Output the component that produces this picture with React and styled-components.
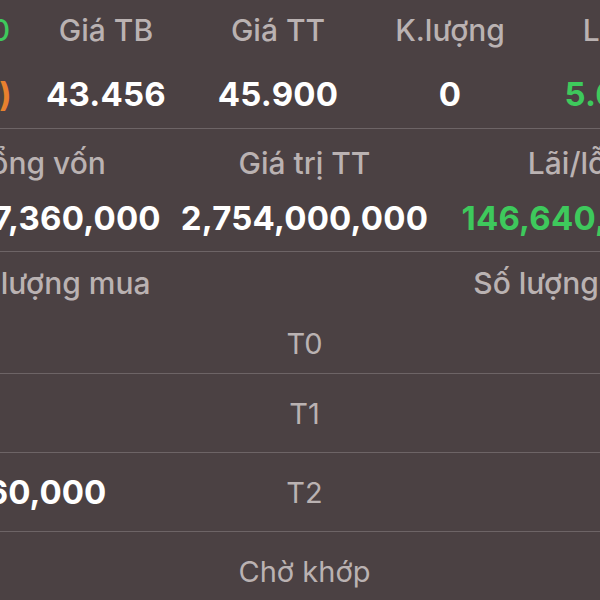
import React from "react";
import styled, { createGlobalStyle } from "styled-components";

const GlobalStyle = createGlobalStyle`
  html, body {
    margin: 0;
    padding: 0;
    background: #4b4143;
    overflow: hidden;
  }
`;

const summary = [
  { label: "HPG 1.50", value: "(+2.0%)", labelTone: "green", tone: "orange", edge: true },
  { label: "Giá TB", value: "43.456" },
  { label: "Giá TT", value: "45.900" },
  { label: "K.lượng", value: "0" },
  { label: "Lãi/lỗ", value: "5.62 %", tone: "green" },
];

const totals = [
  { label: "Tổng vốn", value: "2,607,360,000" },
  { label: "Giá trị TT", value: "2,754,000,000" },
  { label: "Lãi/lỗ", value: "146,640,000", tone: "green" },
];

const settle = [
  { buy: "", name: "T0", sell: "" },
  { buy: "", name: "T1", sell: "" },
  { buy: "160,000", name: "T2", sell: "" },
  { buy: "", name: "Chờ khớp", sell: "" },
];

const colors = {
  white: "#ffffff",
  green: "#3ec95c",
  orange: "#e8802e",
  gray: "#bab2b2",
};

const Screen = styled.div`
  width: 600px;
  height: 600px;
  overflow: hidden;
  background: #4b4143;
  font-family: Inter, "Open Sans", "Liberation Sans", sans-serif;
`;

// nội dung rộng hơn màn hình, bị cắt hai bên
const Canvas = styled.div`
  width: 880px;
  margin-left: -152px;
`;

const Section = styled.div`
  border-bottom: 1.5px solid #6d6466;
  padding-bottom: ${(p) => p.$pad || 0}px;
`;

const FiveCols = styled.div`
  display: grid;
  grid-template-columns: repeat(5, 172px);
`;

const ThreeCols = styled.div`
  display: grid;
  grid-template-columns: 265px 265px 260px;
  padding-left: 59px;
  height: ${(p) => p.$h}px;
  align-items: center;
  border-top: ${(p) => (p.$line ? "1.5px solid #6d6466" : "none")};
  box-sizing: border-box;
`;

const Label = styled.div`
  height: ${(p) => p.$h}px;
  display: flex;
  align-items: center;
  justify-content: ${(p) => (p.$edge ? "flex-end" : "center")};
  padding-right: ${(p) => (p.$edge ? "10px" : "0")};
  font-size: 30px;
  font-weight: 500;
  color: ${(p) => colors[p.$tone] || colors.gray};
  white-space: nowrap;
`;

const Value = styled.div`
  height: ${(p) => p.$h}px;
  display: flex;
  align-items: center;
  justify-content: ${(p) => (p.$edge ? "flex-end" : "center")};
  padding-right: ${(p) => (p.$edge ? "8px" : "0")};
  font-size: 33px;
  font-weight: 700;
  letter-spacing: 0.2px;
  color: ${(p) => colors[p.$tone] || colors.white};
  white-space: nowrap;
`;

const Cell = styled.div`
  text-align: center;
  white-space: nowrap;
`;

const RowName = styled.span`
  font-size: 29px;
  font-weight: 400;
  color: ${colors.gray};
`;

const RowValue = styled.span`
  font-size: 33px;
  font-weight: 700;
  color: ${colors.white};
`;

export default function App() {
  return (
    <Screen>
      <GlobalStyle />
      <Canvas>
        <Section>
          <FiveCols>
            {summary.map((c) => (
              <Label key={c.label} $h={60} $tone={c.labelTone} $edge={c.edge}>
                {c.label}
              </Label>
            ))}
            {summary.map((c) => (
              <Value key={c.label + "v"} $h={68} $tone={c.tone} $edge={c.edge}>
                {c.value}
              </Value>
            ))}
          </FiveCols>
        </Section>

        <Section $pad={12}>
          <ThreeCols $h={68}>
            {totals.map((c) => (
              <Label key={c.label} $h={68}>
                {c.label}
              </Label>
            ))}
          </ThreeCols>
          <ThreeCols $h={42}>
            {totals.map((c) => (
              <Value key={c.label} $h={42} $tone={c.tone}>
                {c.value}
              </Value>
            ))}
          </ThreeCols>
        </Section>

        <ThreeCols $h={62}>
          <Label $h={62}>Khối lượng mua</Label>
          <div />
          <Label $h={62}>Số lượng bán</Label>
        </ThreeCols>
        {settle.map((r, i) => (
          <ThreeCols key={r.name} $h={i === 0 ? 59 : 79} $line={i > 0}>
            <Cell>
              <RowValue>{r.buy}</RowValue>
            </Cell>
            <Cell>
              <RowName>{r.name}</RowName>
            </Cell>
            <Cell>
              <RowValue>{r.sell}</RowValue>
            </Cell>
          </ThreeCols>
        ))}
      </Canvas>
    </Screen>
  );
}
